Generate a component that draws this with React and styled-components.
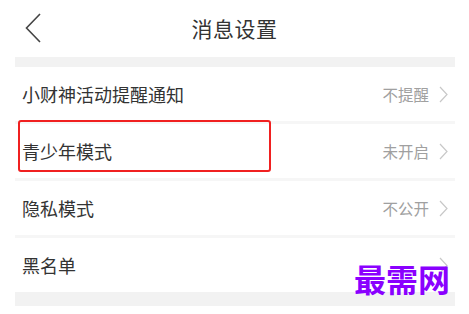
import React from 'react';
import styled, { createGlobalStyle } from 'styled-components';

const GlobalStyle = createGlobalStyle`
  html, body {
    margin: 0;
    padding: 0;
    background: #fff;
    font-family: "Noto Sans CJK SC", "Noto Sans", sans-serif;
  }
`;

const rows = [
  { label: '小财神活动提醒通知', value: '不提醒' },
  { label: '青少年模式', value: '未开启', marked: true },
  { label: '隐私模式', value: '不公开' },
  { label: '黑名单', value: '' },
];

export default function App() {
  return (
    <Page>
      <GlobalStyle />
      <Header>
        <BackButton>
          <svg width="16" height="30" viewBox="0 0 16 30">
            <path d="M15 1 L1.5 15 L15 29" fill="none" stroke="#444" strokeWidth="1.6" />
          </svg>
        </BackButton>
        <Title>消息设置</Title>
      </Header>
      <Content>
        <Band />
        <List>
          {rows.map((row) => (
            <Row key={row.label}>
              <Label>{row.label}</Label>
              <Right>
                {row.value && <Value>{row.value}</Value>}
                <svg width="9" height="17" viewBox="0 0 9 17">
                  <path d="M1 1 L8 8.5 L1 16" fill="none" stroke="#c8c8c8" strokeWidth="1.2" />
                </svg>
              </Right>
              {row.marked && <Marker />}
            </Row>
          ))}
        </List>
        <Band $bottom />
        <Watermark>最需网</Watermark>
      </Content>
    </Page>
  );
}

const Page = styled.div`
  width: 469px;
  height: 314px;
  overflow: hidden;
  background: #fff;
`;

const Header = styled.div`
  position: relative;
  height: 57px;
  display: flex;
  align-items: center;
  justify-content: center;
`;

const BackButton = styled.div`
  position: absolute;
  left: 25px;
  top: 13px;
  display: flex;
`;

const Title = styled.div`
  font-size: 21px;
  color: #333;
  letter-spacing: 0.5px;
  margin-top: -1px;
`;

const Content = styled.div`
  position: relative;
  margin: 0 14px 0 15px;
`;

const Band = styled.div`
  height: ${(p) => (p.$bottom ? '14px' : '10px')};
  background: #f2f2f2;
`;

const List = styled.div`
  display: flex;
  flex-direction: column;
`;

const Row = styled.div`
  position: relative;
  height: 54px;
  display: flex;
  align-items: center;
  justify-content: space-between;
  padding: 0 7px 0 7px;
  border-bottom: 3px solid #f6f6f6;

  &:last-child {
    border-bottom: none;
  }
`;

const Label = styled.div`
  font-size: 18px;
  color: #333;
`;

const Right = styled.div`
  display: flex;
  align-items: center;
  gap: 10px;
`;

const Value = styled.div`
  font-size: 15.5px;
  color: #a0a0a0;
`;

const Marker = styled.div`
  position: absolute;
  left: 3px;
  top: -4px;
  width: 249px;
  height: 48px;
  border: 2px solid #f02020;
  border-radius: 3px;
`;

const Watermark = styled.div`
  position: absolute;
  right: 5px;
  bottom: 12px;
  font-size: 32px;
  font-weight: 700;
  color: #8a00ff;
  line-height: 1;
`;
